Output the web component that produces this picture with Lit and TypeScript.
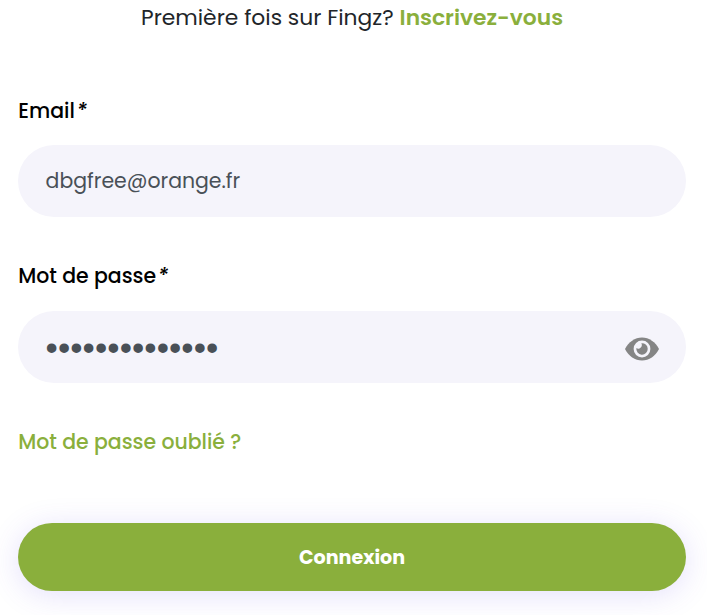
import { LitElement, html, css } from "lit";
import { customElement } from "lit/decorators.js";

@customElement("app-root")
export class AppRoot extends LitElement {
  static styles = css`
    :host {
      display: block;
      height: 615px;
      overflow: hidden;
      background: #fff;
      color: #000;
      font-family: Poppins, Inter, sans-serif;
      font-size: 20.45px;
      line-height: 32px;
    }
    * { box-sizing: border-box; }
    .page { display: flex; flex-direction: column; padding: 2px 21px 0 18px; white-space: nowrap; }
    .signup { display: flex; gap: 6px; padding-left: 123px; color: #212529; font-size: 21.82px; }
    a { color: #8aaf3c; text-decoration: none; }
    .signup a { font-weight: 600; }
    .label { display: flex; gap: 2px; height: 32px; padding-left: 0.2px; font-weight: 500; }
    .email-label { margin-top: 61px; }
    .password-label { margin-top: 43px; }
    .star { font-style: italic; }
    .field {
      display: flex;
      align-items: center;
      justify-content: space-between;
      height: 72px;
      margin-top: 18px;
      padding: 0 27px 0 27.6px;
      border-radius: 36px;
      background: #f5f4fb;
      color: #495057;
    }
    .password { margin-top: 19px; }
    .dots { padding-top: 2px; font-family: "Liberation Sans", sans-serif; font-size: 35px; letter-spacing: 0.09px; }
    .eye { width: 34px; height: 24px; margin-top: 4px; }
    .forgot { margin-top: 43px; padding-left: 0.2px; font-weight: 500; }
    .submit {
      height: 68px;
      margin-top: 65px;
      padding: 2px 0 0;
      border: 0;
      border-radius: 34px;
      background: #8aaf3c;
      box-shadow: 0 4px 30px rgba(93, 70, 232, 0.17);
      color: #fff;
      font: 700 19.1px/32px Poppins, Inter, sans-serif;
    }
  `;

  render() {
    return html`
      <main class="page">
        <div class="signup"><span>Première fois sur Fingz?</span><a>Inscrivez-vous</a></div>
        <div class="label email-label"><span>Email</span><span class="star">*</span></div>
        <div class="field"><span>dbgfree@orange.fr</span></div>
        <div class="label password-label"><span>Mot de passe</span><span class="star">*</span></div>
        <div class="field password">
          <span class="dots">${"•".repeat(14)}</span>
          <svg class="eye" viewBox="0 0 34 24">
            <path fill="#858585" d="M0 12C3.500 5 10 .5 17 .5S30.500 5 34 12C30.500 19 24 23.500 17 23.500S3.500 19 0 12Z" />
            <circle cx="17" cy="12" r="8.400" fill="#f5f4fb" />
            <path fill="#858585" d="M16.300 6.300A5.700 5.700 0 1 1 11.400 11C12.200 11.700 13.400 11.900 14.500 11.500C16.500 10.800 17.600 8.300 16.300 6.300Z" />
          </svg>
        </div>
        <a class="forgot">Mot de passe oublié ?</a>
        <button class="submit">Connexion</button>
      </main>
    `;
  }
}
